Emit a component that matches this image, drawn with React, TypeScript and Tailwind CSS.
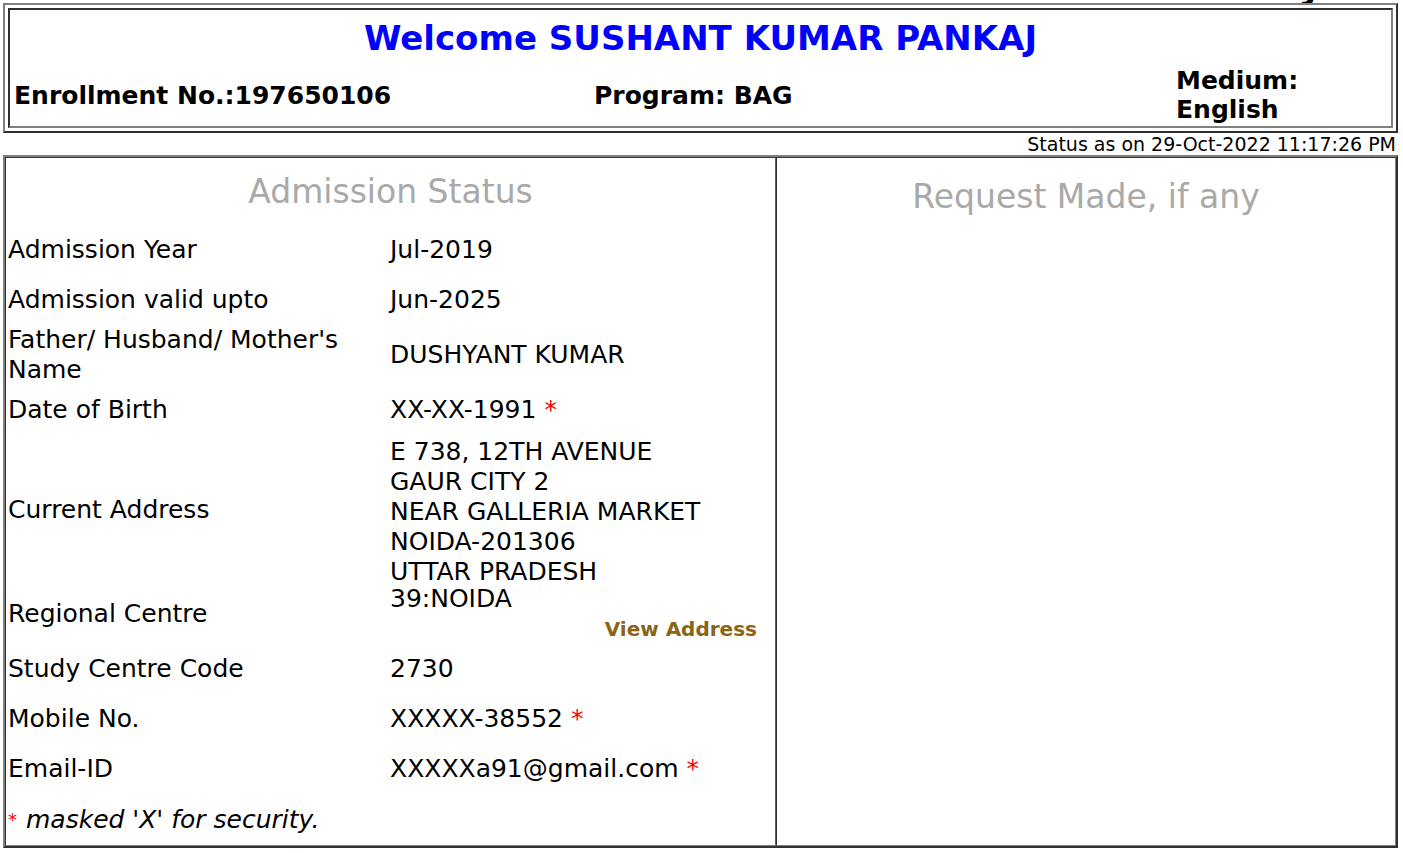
function Star() {
  return <span className="text-[#ff0000]"> *</span>;
}

function Row({
  label,
  children,
}: {
  label: React.ReactNode;
  children: React.ReactNode;
}) {
  return (
    <div className="flex min-h-[50px] items-center">
      <div className="w-[384px] pl-[2px]">{label}</div>
      <div className="flex-1 pr-[18px]">{children}</div>
    </div>
  );
}

export default function App() {
  return (
    <div
      className="min-h-screen bg-white text-black"
      style={{ fontFamily: '"DejaVu Sans", Verdana, sans-serif' }}
    >
      <div className="relative h-[3px] overflow-hidden">
        <span className="absolute bottom-[-1px] right-[80px] text-[38px] font-bold leading-none">
          y
        </span>
      </div>

      {/* header box */}
      <div className="ml-[3px] mr-[5px] border-2 border-t-[#808080] border-l-[#808080] border-b-[#303030] border-r-[#303030] p-[3px]">
        <div className="border-2 border-t-[#303030] border-l-[#303030] border-b-[#808080] border-r-[#808080]">
          <div className="pt-[8px] text-center text-[34px] font-bold leading-[40px] text-[#0000ff]">
            Welcome SUSHANT KUMAR PANKAJ
          </div>
          <div className="flex items-center pt-[8px] pb-[2px] text-[25px] font-bold leading-[29px]">
            <div className="w-[584px] pl-[4px]">Enrollment No.:197650106</div>
            <div className="w-[582px]">Program: BAG</div>
            <div>
              Medium:
              <br />
              English
            </div>
          </div>
        </div>
      </div>

      <div className="pr-[7px] text-right text-[19px] leading-[22px]">
        Status as on 29-Oct-2022 11:17:26 PM
      </div>

      {/* main table */}
      <div className="ml-[3px] mr-[5px] flex border-2 border-t-[#808080] border-l-[#808080] border-b-[#303030] border-r-[#303030] text-[25px] leading-[30px]">
        <div className="w-[771px] border border-t-[#303030] border-l-[#303030] border-b-[#808080] border-r-[#606060]">
          <div className="flex h-[67px] items-center justify-center text-[33px] text-[#a9a9a9]">
            Admission Status
          </div>
          <Row label="Admission Year">Jul-2019</Row>
          <Row label="Admission valid upto">Jun-2025</Row>
          <Row
            label={
              <div className="leading-[30px]">
                Father/ Husband/ Mother's
                <br />
                Name
              </div>
            }
          >
            DUSHYANT KUMAR
          </Row>
          <Row label="Date of Birth">
            XX-XX-1991
            <Star />
          </Row>
          <Row label="Current Address">
            <div className="-mb-[3px] pt-[2px]">
              E 738, 12TH AVENUE
              <br />
              GAUR CITY 2
              <br />
              NEAR GALLERIA MARKET
              <br />
              NOIDA-201306
              <br />
              UTTAR PRADESH
            </div>
          </Row>
          <Row label="Regional Centre">
            <div>39:NOIDA</div>
            <div className="text-right text-[20px] font-bold text-[#8a6515]">
              View Address
            </div>
          </Row>
          <Row label="Study Centre Code">2730</Row>
          <Row label="Mobile No.">
            XXXXX-38552
            <Star />
          </Row>
          <Row label="Email-ID">
            XXXXXa91@gmail.com
            <Star />
          </Row>
          <div className="flex h-[51px] items-center pl-[2px]">
            <span className="mr-[9px] text-[18px] text-[#ff0000]">*</span>
            <span className="italic">masked 'X' for security.</span>
          </div>
        </div>
        <div className="flex-1 border border-t-[#303030] border-l-[#303030] border-b-[#808080] border-r-[#808080]">
          <div className="flex h-[77px] items-center justify-center text-[33px] text-[#a9a9a9]">
            Request Made, if any
          </div>
        </div>
      </div>
    </div>
  );
}
